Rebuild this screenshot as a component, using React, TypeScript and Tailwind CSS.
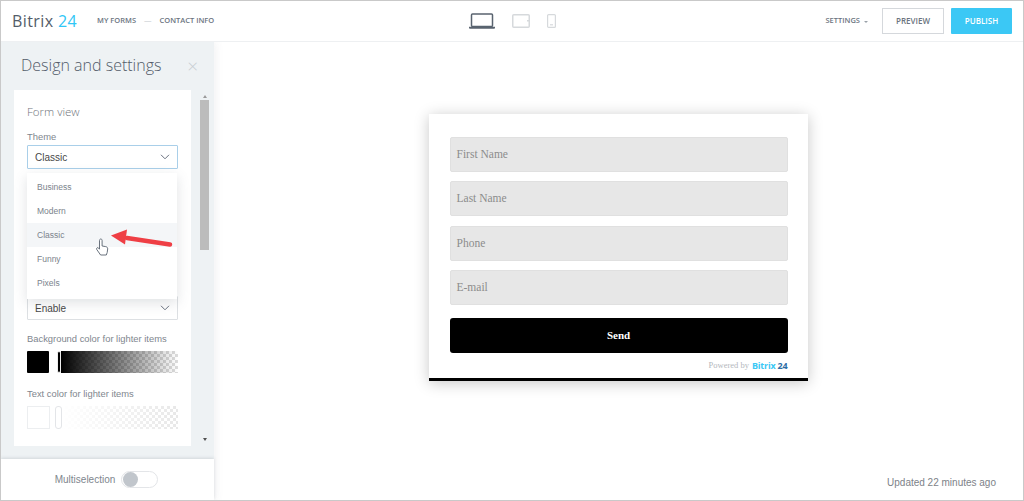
const themes = ["Business", "Modern", "Classic", "Funny", "Pixels"];
const fields = ["First Name", "Last Name", "Phone", "E-mail"];

function Chevron() {
  return (
    <svg width="10" height="6" viewBox="0 0 10 6" fill="none" stroke="#6b7280" strokeWidth="1">
      <path d="M1 .8l4 4 4-4" />
    </svg>
  );
}

function DeviceIcons() {
  return (
    <div className="flex items-center gap-[17px]">
      <svg width="26" height="16" viewBox="0 0 26 16" fill="none">
        <rect x="2.5" y="1" width="21" height="12.5" rx="1" stroke="#59636f" strokeWidth="1.5" />
        <path d="M0 13.8h26v1a1 1 0 0 1-1 1H1a1 1 0 0 1-1-1z" fill="#59636f" />
      </svg>
      <svg width="18" height="14" viewBox="0 0 18 14" fill="none">
        <rect x=".75" y=".75" width="16.5" height="12.5" rx="1" stroke="#d6d9dc" strokeWidth="1.5" />
        <path d="M15 6.7h2" stroke="#d6d9dc" strokeWidth="1.5" />
      </svg>
      <svg width="9" height="14" viewBox="0 0 9 14" fill="none">
        <rect x=".6" y=".6" width="7.8" height="12.8" rx="1" stroke="#d6d9dc" strokeWidth="1.2" />
        <path d="M3 10.8h3" stroke="#d6d9dc" strokeWidth="1.2" />
      </svg>
    </div>
  );
}

function Header() {
  return (
    <header className="relative z-20 flex h-[41px] shrink-0 items-center border-b border-[#eef0f2] bg-white pl-[11px] pr-[11px]">
      <div className="w-[85px] text-[16px] font-medium leading-none tracking-[0.4px] text-[#535c69]">
        Bitrix <span className="text-[#2fc6f6]">24</span>
      </div>
      <nav className="flex items-center text-[7.5px] font-semibold text-[#6b7480]">
        <span>MY FORMS</span>
        <span className="mx-[8px] text-[#d0d4d8]">—</span>
        <span>CONTACT INFO</span>
      </nav>
      <div className="ml-[255px]">
        <DeviceIcons />
      </div>
      <div className="ml-auto flex items-center text-[7.5px] font-semibold">
        <span className="mr-[14px] flex items-center gap-[4px] text-[#6b7480]">
          SETTINGS
          <span className="mt-[1px] h-0 w-0 border-x-[2px] border-t-[2px] border-x-transparent border-t-[#9aa1a9]" />
        </span>
        <button className="h-[26px] w-[62px] border border-[#d5d8dc] text-[8px] text-[#6b7480]">PREVIEW</button>
        <button className="ml-[7px] h-[26px] w-[61px] rounded-[1px] bg-[#3bc8f5] text-[8px] text-white">PUBLISH</button>
      </div>
    </header>
  );
}

function ThemeMenu() {
  return (
    <div className="absolute left-[26px] top-[83px] z-10 w-[150px] bg-white pb-[4px] pt-[2px] font-['Liberation_Sans',sans-serif] text-[8.5px] text-[#7b838c] shadow-[0_4px_12px_rgba(83,92,105,0.18)]">
      {themes.map((name) => (
        <div
          key={name}
          className={`flex h-[24px] items-center pl-[10px] ${name === "Classic" ? "bg-[#f4f6f8]" : ""}`}
        >
          {name}
        </div>
      ))}
    </div>
  );
}

function Pointer() {
  return (
    <svg className="absolute left-[91px] top-[134px] z-10" width="84" height="40" viewBox="0 0 84 40" fill="none">
      <path d="M78 20.5L35 14" stroke="#ef3f45" strokeWidth="4.5" strokeLinecap="round" />
      <path d="M19 11.5L35 5.5l-2 15z" fill="#ef3f45" />
      <path
        d="M7.5 16.5c0-2 2.6-2 2.6 0v5.5l3.6.6c1.4.3 2 1 2 2.3l-.5 3.6-.9 2.5H8.6L4.7 25.4c-.8-1.4 1-2.4 2-1.2l.8 1z"
        fill="#fff"
        stroke="#59636f"
        strokeWidth=".9"
      />
    </svg>
  );
}

function Sidebar() {
  return (
    <aside className="relative z-10 flex w-[213px] shrink-0 flex-col bg-[#eef2f4] shadow-[2px_0_8px_rgba(83,92,105,0.08)]">
      <div className="flex h-[48px] shrink-0 items-center justify-between pb-[2px] pl-[20px] pr-[16px]">
        <h1 className="text-[16px] font-light text-[#535c69]">Design and settings</h1>
        <span className="mt-[3px] text-[19px] font-light leading-none text-[#c8cdd2]">×</span>
      </div>
      <div className="relative flex h-[356px] shrink-0 pl-[13px]">
        <div className="w-[177px] bg-white px-[13px] pt-[14px] font-['Liberation_Sans',sans-serif]">
          <p className="font-['Open_Sans',sans-serif] text-[11.5px] font-light leading-[15px] text-[#70757c]">Form view</p>
          <p className="mt-[11px] text-[9.4px] leading-[14px] text-[#80868e]">Theme</p>
          <div className="mt-[1px] flex h-[24px] items-center justify-between rounded-[1px] border border-[#a9cfe9] px-[7px] text-[10px] text-[#474747]">
            Classic
            <Chevron />
          </div>
          <div className="mt-[127px] flex h-[24px] items-center justify-between rounded-[1px] border border-[#dde0e3] px-[7px] text-[10px] text-[#474747]">
            Enable
            <Chevron />
          </div>
          <p className="mt-[12px] text-[9.4px] leading-[14px] text-[#80868e]">Background color for lighter items</p>
          <div className="mt-[5px] flex h-[22px] items-center">
            <div className="h-[22px] w-[22px] rounded-[1px] bg-black" />
            <div className="ml-[8px] h-[22px] w-[4px] rounded-[2px] border border-[#eee] bg-black" />
            <div className="h-[22px] flex-1 [background:linear-gradient(to_right,#000,rgba(0,0,0,0)),repeating-conic-gradient(#dcdcdc_0_25%,#fff_0_50%)_0_0/6px_6px]" />
          </div>
          <p className="mt-[14px] text-[9.4px] leading-[14px] text-[#80868e]">Text color for lighter items</p>
          <div className="mt-[5px] flex h-[23px] items-center">
            <div className="h-[23px] w-[23px] border border-[#eceef0] bg-white" />
            <div className="ml-[5px] h-[23px] w-[7px] rounded-[3px] border border-[#e3e5e8] bg-white" />
            <div className="h-[23px] flex-1 [background:linear-gradient(to_right,#fff,rgba(255,255,255,0)),repeating-conic-gradient(#e8e8e8_0_25%,#fff_0_50%)_0_0/6px_6px]" />
          </div>
        </div>
        <div className="ml-[9px] flex w-[9px] flex-col items-center">
          <span className="mt-[5px] h-0 w-0 border-x-[2.5px] border-b-[3px] border-x-transparent border-b-[#9a9a9a]" />
          <div className="mt-[2px] h-[150px] w-[9px] bg-[#bcbcbc]" />
          <span className="mb-[5px] mt-auto h-0 w-0 border-x-[2.5px] border-t-[3px] border-x-transparent border-t-[#505050]" />
        </div>
        <ThemeMenu />
        <Pointer />
      </div>
      <div className="mt-auto flex h-[41px] items-center justify-center gap-[6px] bg-white pr-[2px] font-['Liberation_Sans',sans-serif] text-[10px] text-[#80868e] shadow-[0_-1px_3px_rgba(83,92,105,0.18)]">
        Multiselection
        <span className="flex h-[17px] w-[37px] items-center rounded-full border border-[#e3e5e8] pl-[1px]">
          <span className="h-[15px] w-[15px] rounded-full bg-[#c1c6cc]" />
        </span>
      </div>
    </aside>
  );
}

function FormCard() {
  return (
    <div className="w-[379px] border-b-[3px] border-black bg-white pl-[21px] pr-[20px] pt-[23px] shadow-[0_2px_14px_rgba(0,0,0,0.22)]">
      <div className="flex flex-col gap-[9.4px]">
        {fields.map((name) => (
          <div
            key={name}
            className="flex h-[35px] items-center rounded-[2px] border border-[#e0e0e0] bg-[#e7e7e7] pl-[6px] font-['Liberation_Serif',serif] text-[11.5px] text-[#8c8c8c]"
          >
            {name}
          </div>
        ))}
      </div>
      <button className="mt-[13px] h-[35px] w-full rounded-[3px] bg-black font-['Liberation_Serif',serif] text-[11px] font-bold text-white">
        Send
      </button>
      <div className="flex h-[25px] items-center justify-end font-['Liberation_Serif',serif] text-[8.5px] text-[#b4b8bd]">
        Powered by
        <span className="ml-[3px] font-['Open_Sans',sans-serif] text-[9px] font-bold tracking-[-0.2px] text-[#3bc8f5]">
          Bitrix <span className="text-[#2e6da4]">24</span>
        </span>
      </div>
    </div>
  );
}

export default function App() {
  return (
    <div className="flex h-[501px] w-[1024px] flex-col overflow-hidden border border-[#c9c9c9] bg-white font-['Open_Sans',sans-serif]">
      <Header />
      <div className="flex min-h-0 flex-1">
        <Sidebar />
        <main className="flex flex-1 flex-col items-center pt-[72px]">
          <div className="mr-[1px]">
            <FormCard />
          </div>
          <p className="mb-[10px] mr-[27px] mt-auto self-end font-['Liberation_Sans',sans-serif] text-[10px] text-[#7d8288]">
            Updated 22 minutes ago
          </p>
        </main>
      </div>
    </div>
  );
}
